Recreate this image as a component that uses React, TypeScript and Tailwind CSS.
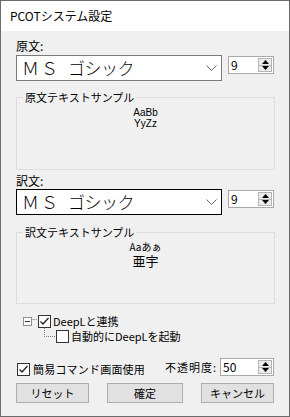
import React from "react";

const FONT = { fontFamily: '"Noto Sans CJK JP", "Noto Sans", sans-serif' };

function Chevron() {
  return (
    <svg width="11" height="7" viewBox="0 0 11 7" className="mr-[4px]">
      <path d="M0.5 0.5 L5.5 5.5 L10.5 0.5" fill="none" stroke="#606060" strokeWidth="1" />
    </svg>
  );
}

function Combo({ focused }: { focused?: boolean }) {
  return (
    <div
      className={`w-[206px] h-[26px] bg-white border flex items-center justify-between ${
        focused ? "border-[#000000]" : "border-[#7a7a7a]"
      }`}
    >
      <span className="pl-[5px] flex items-center text-[17px] leading-[24px] font-light text-black">
        <span className="tracking-[2px]">ＭＳ</span>
        <span className="ml-[8px] tracking-[-0.5px]">ゴシック</span>
      </span>
      <Chevron />
    </div>
  );
}

function Spinner({ value, w }: { value: string; w: string }) {
  return (
    <div className={`${w} h-[18px] bg-white border border-[#a8a8a8] flex items-stretch`}>
      <span className="flex-1 pl-[2px] text-[12px] leading-[15px] text-black">{value}</span>
      <div className="w-[14px] my-[1px] mr-[1px] border border-[#b5b5b5] flex flex-col">
        <div className="flex-1 bg-[#ececec] flex items-center justify-center border-b border-[#b5b5b5]">
          <svg width="7" height="4" viewBox="0 0 7 4">
            <path d="M0 4 L3.5 0 L7 4 Z" fill="#000" />
          </svg>
        </div>
        <div className="flex-1 bg-[#ececec] flex items-center justify-center">
          <svg width="7" height="4" viewBox="0 0 7 4">
            <path d="M0 0 L3.5 4 L7 0 Z" fill="#000" />
          </svg>
        </div>
      </div>
    </div>
  );
}

function CheckBox({ checked }: { checked?: boolean }) {
  return (
    <div className="w-[13px] h-[13px] bg-white border border-[#333333] flex items-center justify-center shrink-0">
      {checked && (
        <svg width="11" height="11" viewBox="0 0 11 11">
          <path d="M1.5 5.5 L4 8 L9.5 2" fill="none" stroke="#222" strokeWidth="1.3" />
        </svg>
      )}
    </div>
  );
}

function Group({ title, children, h }: { title: string; children: React.ReactNode; h: string }) {
  return (
    <div className={`relative w-[259px] ${h} border border-[#dcdcdc]`}>
      <span className="absolute left-[6px] top-[-8px] px-[2px] bg-[#f0f0f0] text-[11px] leading-[14px] text-black">
        {title}
      </span>
      {children}
    </div>
  );
}

function Button({ label, w }: { label: string; w: string }) {
  return (
    <div className={`${w} h-[20px] bg-[#e1e1e1] border border-[#adadad] flex items-center justify-center text-[11px] text-black`}>
      {label}
    </div>
  );
}

export default function App() {
  return (
    <div className="w-[290px] h-[417px] bg-[#f0f0f0] border border-[#6b6b6b] flex flex-col text-black" style={FONT}>
      <div className="h-[30px] bg-white flex items-center pl-[9px] text-[12px]">PCOTシステム設定</div>
      <div className="pl-[15px] flex flex-col">
        <div className="mt-[8px] h-[14px] leading-[14px] text-[12px]">原文:</div>
        <div className="mt-[2px] flex items-start gap-[6px]">
          <Combo />
          <div className="mt-[1px]">
            <Spinner value="9" w="w-[46px]" />
          </div>
        </div>
        <div className="mt-[16px]">
          <Group title="原文テキストサンプル" h="h-[73px]">
            <div className="flex flex-col items-center pt-[9px] text-[10px] leading-[11px]" style={{ fontFamily: '"Liberation Sans", sans-serif' }}>
              <span>AaBb</span>
              <span>YyZz</span>
            </div>
          </Group>
        </div>
        <div className="mt-[4px] h-[14px] leading-[14px] text-[12px]">訳文:</div>
        <div className="mt-[1px] flex items-start gap-[6px]">
          <Combo focused />
          <div className="mt-[1px]">
            <Spinner value="9" w="w-[46px]" />
          </div>
        </div>
        <div className="mt-[17px]">
          <Group title="訳文テキストサンプル" h="h-[72px]">
            <div className="flex flex-col items-center pt-[8px]">
              <div className="h-[11px] text-[10px] leading-[11px]">Aaあぁ</div>
              <div className="mt-[1px] h-[15px] text-[13px] leading-[15px]">亜宇</div>
            </div>
          </Group>
        </div>

        <div className="relative mt-[10px] h-[30px]">
          <svg className="absolute left-0 top-0" width="60" height="30" viewBox="0 0 60 30">
            <path d="M16.5 5.5 H21" stroke="#808080" strokeDasharray="1 1" fill="none" />
            <path d="M28.5 14 V22.5 H40" stroke="#808080" strokeDasharray="1 1" fill="none" />
          </svg>
          <div className="flex items-center h-[14px] pl-[7px]">
            <div className="w-[9px] h-[9px] border border-[#919191] bg-white flex items-center justify-center relative">
              <div className="w-[5px] h-[1px] bg-[#333]" />
            </div>
            <div className="w-[6px]" />
            <CheckBox checked />
            <span className="ml-[2px] text-[11px] leading-[14px]">DeepLと連携</span>
          </div>
          <div className="flex items-center h-[14px] mt-[1px] pl-[40px]">
            <CheckBox />
            <span className="ml-[2px] text-[11px] leading-[14px]">自動的にDeepLを起動</span>
          </div>
        </div>

        <div className="mt-[14px] flex items-start h-[18px]">
          <div className="mt-[5px] ml-[1px]">
            <CheckBox checked />
          </div>
          <span className="ml-[3px] mt-[4px] text-[11px] leading-[14px] tracking-[0.2px]">簡易コマンド画面使用</span>
          <span className="ml-auto mr-[3px] mt-[2px] text-[11px] leading-[14px] tracking-[1px]">不透明度:</span>
          <div className="mr-[15px]">
            <Spinner value="50" w="w-[54px]" />
          </div>
        </div>

        <div className="mt-[7px] flex items-center pr-[15px] justify-between">
          <Button label="リセット" w="w-[73px]" />
          <Button label="確定" w="w-[76px]" />
          <Button label="キャンセル" w="w-[73px]" />
        </div>
      </div>
    </div>
  );
}
